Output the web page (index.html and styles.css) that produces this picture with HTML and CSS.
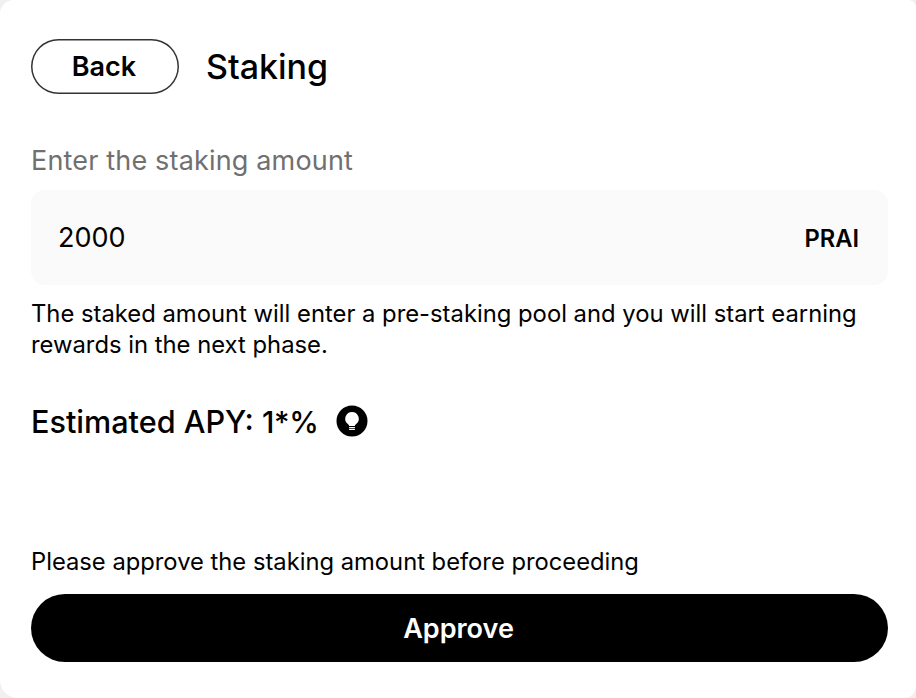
FILE: index.html
```html
<!DOCTYPE html>
<html lang="en">

<head>
    <meta charset="UTF-8">
    <meta name="viewport" content="width=device-width, initial-scale=1.0">
    <title>Staking</title>
    <link rel="stylesheet" href="styles.css">
</head>

<body>
    <div class="card">
        <div class="header">
            <button class="back-btn" type="button">Back</button>
            <h1 class="title">Staking</h1>
        </div>

        <label class="amount-label" for="amount">Enter the staking amount</label>
        <div class="amount-box">
            <input type="text" id="amount" value="2000">
            <span class="token">PRAI</span>
        </div>
        <p class="description">The staked amount will enter a pre-staking pool and you will start earning rewards in the next phase.</p>

        <div class="apy">
            <span class="apy-text">Estimated APY: <span class="apy-value">1*%</span></span>
            <!-- Light bulb tip -->
            <svg class="tip-icon" viewBox="0 0 32 32" aria-hidden="true">
                <circle cx="16" cy="16" r="15.5" fill="#000" />
                <path d="M16 6.9a6.8 6.8 0 0 0-4.7 11.7c1.1 1.1 1.8 1.6 1.8 2.4h5.8c0-.8.7-1.3 1.8-2.4A6.8 6.8 0 0 0 16 6.9z" fill="#fff" />
                <path d="M13.1 22.5h5.8M13.1 24.4h5.8" stroke="#fff" stroke-width="1.2" />
            </svg>
        </div>

        <p class="hint">Please approve the staking amount before proceeding</p>
        <button class="approve-btn" type="button">Approve</button>
    </div>
</body>

</html>
```
FILE: styles.css
```css
* {
    box-sizing: border-box;
}

body {
    margin: 0;
    font-family: Inter, sans-serif;
    color: #000;
    background-color: #f0f0f0;
}

.card {
    display: flex;
    flex-direction: column;
    height: 698px;
    padding: 39px 28px 36px 31px;
    border-radius: 14px 8px 12px 18px;
    background-color: #fff;
}

.header {
    display: flex;
    align-items: center;
    gap: 27px;
}

.back-btn {
    width: 148px;
    height: 55px;
    padding: 0 2px 0 0;
    border: none;
    border-radius: 28px;
    box-shadow: inset 0 0 0 1.5px #333;
    background-color: #fff;
    color: #000;
    font: 600 27px Inter, sans-serif;
}

.title {
    margin: 0;
    font-size: 34px;
    font-weight: 500;
    line-height: 42px;
}

.amount-label {
    margin-top: 48px;
    color: #707070;
    font-size: 27px;
    line-height: 37px;
    letter-spacing: 0.17px;
}

.amount-box {
    display: flex;
    align-items: center;
    height: 95px;
    margin-top: 11px;
    padding: 0 29px 0 27px;
    border-radius: 14px;
    background-color: #fafafa;
}

.amount-box input {
    flex: 1;
    min-width: 0;
    padding: 0;
    border: none;
    outline: none;
    background: none;
    color: #000;
    font: 400 27px Inter, sans-serif;
}

.token {
    margin-top: 1px;
    font-size: 23.7px;
    font-weight: 600;
}

.description {
    margin: 13px 0 0;
    font-size: 23.8px;
    line-height: 31px;
}

.apy {
    display: flex;
    align-items: center;
    gap: 17px;
    margin-top: 41px;
}

.apy-text {
    padding-top: 1px;
    font-size: 30.6px;
    font-weight: 500;
    line-height: 39px;
}

.apy-value {
    font-size: 29.8px;
    letter-spacing: -0.2px;
}

.tip-icon {
    width: 32px;
    height: 32px;
    margin-bottom: 2px;
}

.hint {
    margin: auto 0 17px;
    font-size: 23.75px;
    line-height: 30px;
}

.approve-btn {
    height: 68px;
    padding: 0 2px 0 0;
    border: none;
    border-radius: 34px;
    background-color: #000;
    color: #fff;
    font: 600 27px Inter, sans-serif;
}
```
